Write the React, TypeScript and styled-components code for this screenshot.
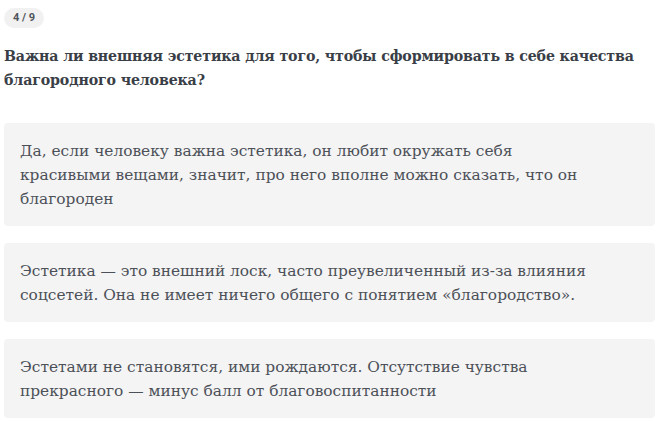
import React from "react";
import styled, { createGlobalStyle } from "styled-components";

const Global = createGlobalStyle`
  html, body { margin: 0; padding: 0; background: #ffffff; }
  body { font-family: "DejaVu Serif", "Liberation Serif", serif; }
`;

const Page = styled.div`
  display: flex;
  flex-direction: column;
  padding: 8px 5px 0 4px;
`;

const Badge = styled.div`
  align-self: flex-start;
  height: 20px;
  padding: 0 9px;
  border-radius: 10px;
  background: #f1f1f1;
  color: #50545b;
  font-family: "Roboto", "Liberation Sans", sans-serif;
  font-weight: 700;
  font-size: 11px;
  line-height: 20px;
`;

const Question = styled.h1`
  margin: 16px 0 0 0;
  color: #393e47;
  font-family: "DejaVu Serif", serif;
  font-weight: 700;
  font-size: 14.2px;
  letter-spacing: -0.15px;
  line-height: 24px;
`;

const Answers = styled.div`
  display: flex;
  flex-direction: column;
  gap: 17px;
  margin-top: 31px;
`;

const Answer = styled.div`
  background: #f4f4f4;
  border-radius: 4px;
  padding: 15.5px 64px 15.5px 16px;
  color: #4c5058;
  font-family: "DejaVu Serif", serif;
  font-size: 15.4px;
  line-height: 24px;
`;

const answers = [
  "Да, если человеку важна эстетика, он любит окружать себя красивыми вещами, значит, про него вполне можно сказать, что он благороден",
  "Эстетика — это внешний лоск, часто преувеличенный из-за влияния соцсетей. Она не имеет ничего общего с понятием «благородство».",
  "Эстетами не становятся, ими рождаются. Отсутствие чувства прекрасного — минус балл от благовоспитанности",
];

export default function App() {
  return (
    <>
      <Global />
      <Page>
        <Badge>4 / 9</Badge>
        <Question>
          Важна ли внешняя эстетика для того, чтобы сформировать в себе качества благородного человека?
        </Question>
        <Answers>
          {answers.map((a, i) => (
            <Answer key={i}>{a}</Answer>
          ))}
        </Answers>
      </Page>
    </>
  );
}
